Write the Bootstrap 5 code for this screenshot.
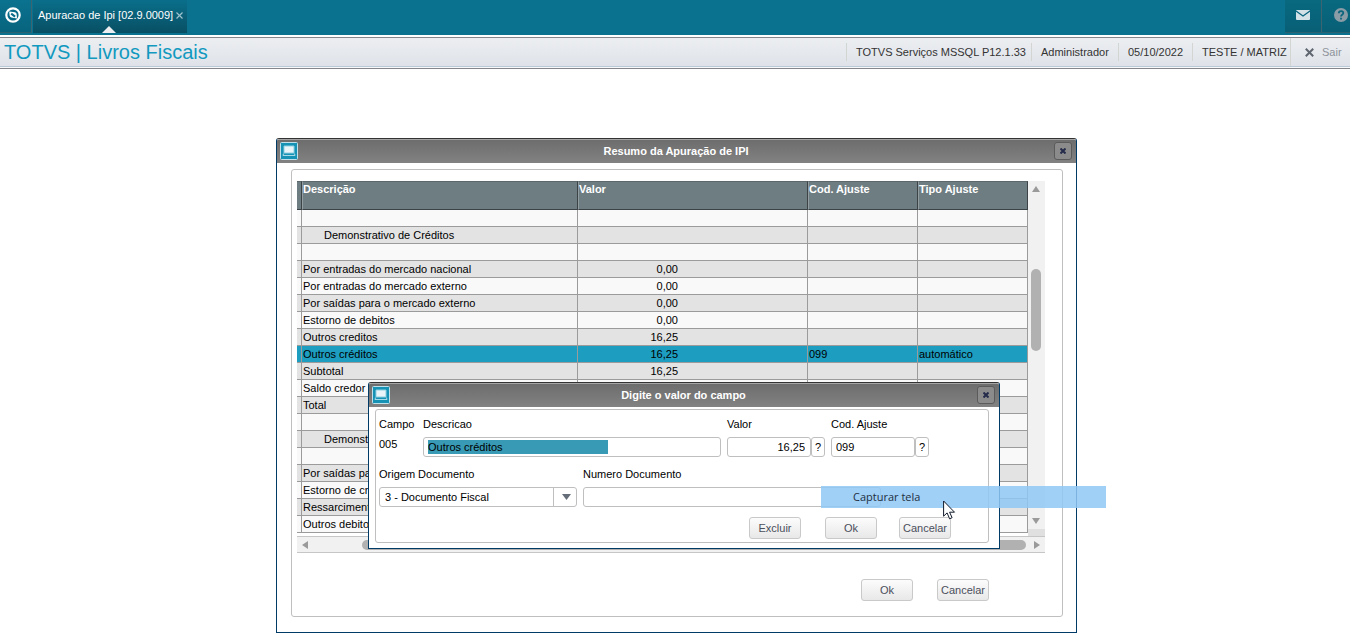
<!DOCTYPE html>
<html lang="pt-BR">
<head>
<meta charset="utf-8">
<meta name="viewport" content="width=device-width, initial-scale=1">
<title>TOTVS | Livros Fiscais</title>
<link href="https://cdn.jsdelivr.net/npm/bootstrap@5.3.0/dist/css/bootstrap.min.css" rel="stylesheet">
<style>
  body { font-family: "Liberation Sans", Arial, sans-serif; font-size: 11px; line-height: 14px; color: #000; background: #fff; overflow-x: hidden; }
  svg { display: block; }
  a { color: inherit; text-decoration: none; }

  .topbar { height: 35px; background: #0a728f; }
  .topbar-btn { height: 33px; border: 0; border-right: 1px solid #3c6470; border-bottom: 1px solid #2b6271; background: linear-gradient(#0a728f, #08647e); padding: 0; }
  .logo-btn { width: 32px; }
  .mail-btn { width: 37px; background: linear-gradient(#08697f, #085f76); }
  .help-btn { width: 28px; background: linear-gradient(#08697f, #085f76); border-right: 0; }
  .app-tab { height: 33px; width: 154px; margin-left: 1px; padding: 0 0 3px 5px; gap: 3px; background: linear-gradient(#0a6f8b, #084f63); color: #fff; }
  .tab-close { border: 0; background: none; padding: 0; }
  .tab-pointer { left: 69px; bottom: 0; }

  .headbar { height: 32px; margin-top: 2px; border-top: 1px solid #85868c; border-bottom: 1px solid #85868c; background: linear-gradient(#eceef1, #dfe3e9 28px, #b9c9d6 28px, #b9c9d6 29px, #f6f8fa 29px); }
  .headbar h1 { font-size: 20px; line-height: 28px; color: #1199bf; }
  .info-item { height: 18px; border-left: 1px solid #d3d5d2; padding-left: 9px; color: #333; }
  .w-server { width: 185px; } .w-user { width: 87px; } .w-date { width: 74px; } .w-branch { width: 98px; }
  .exit-link { width: 60px; height: 28px; padding-left: 14px; gap: 8px; color: #8d929b; }

  .desktop { padding: 69px 0 8px 3px; }
  .win { background: #fff; border: 1px solid #003a66; border-top-color: #333; border-radius: 3px 3px 0 0; }
  .win-main { width: 801px; }
  .win-title { height: 24px; padding: 0 4px 0 3px; background: linear-gradient(#a5a5a5 1px, #6d6d6d 1px, #828282); color: #fff; font-weight: bold; border-radius: 2px 2px 0 0; }
  .win-title h2 { font-size: 11px; line-height: 14px; font-weight: bold; }
  .win-x { width: 18px; height: 18px; padding: 0; border: 1px solid #5b5b5b; border-radius: 3px; background: #8b8b8b; }
  .frame { border: 1px solid #bfbfbf; border-radius: 3px; }
  .frame-main { margin: 6px 13px 15px 14px; padding: 11px 17px 15px 5px; }

  .grid-pane { padding-bottom: 3px; }
  .grid-table { table-layout: fixed; width: 731px; border-collapse: separate; border-spacing: 0; }
  .grid-table th { height: 29px; padding: 0; background: #6e7d82; color: #fff; vertical-align: top; border-top: 1px solid #5b676b; border-right: 1px solid #3c4347; border-bottom: 1px solid #3c4347; border-left: 1px solid #929da1; }
  .grid-table td { height: 17px; padding: 1px 1px 0; line-height: 15px; border-right: 1px solid #9b9b9b; border-bottom: 1px solid #9b9b9b; white-space: nowrap; overflow: hidden; background: #f9f9f9; }
  .grid-table th:first-child, .grid-table td:first-child { padding: 0; border-left: 0; }
  .grid-table tr:nth-child(even) td { background: #e3e3e3; }
  .grid-table tbody tr.picked td { background: #1d9dbf; }
  .grid-table td.amount { text-align: right; padding-right: 129px; }
  .grid-table td.section { padding-left: 22px; }

  .vscroll { width: 17px; background: #f1f1f1; border-bottom: 7px solid #e0e0e0; padding: 5px 3px 5px; }
  .vthumb { width: 10px; height: 82px; margin-top: 77px; border-radius: 5px; background: #b1b1b1; }
  .hscroll { height: 17px; border-top: 1px solid #c6c6c6; border-bottom: 1px solid #c6c6c6; background: #f1f1f1; padding: 0 5px; }
  .hthumb { height: 10px; margin: 0 8px 0 54px; border-radius: 5px; background: #b1b1b1; }

  .btn-flat { width: 52px; height: 22px; padding: 0; border: 1px solid #c9c9c9; border-radius: 3px; background: linear-gradient(#fcfcfc, #e8e8e8); color: #4b4f5c; font-size: 11px; line-height: 18px; }
  .main-actions { margin-top: 26px; padding-right: 56px; gap: 24px; }

  .win-edit { width: 632px; left: 91px; top: 243px; }
  .frame-edit { margin: 2px 10px 5px 6px; padding: 7px 3px 3px; }
  .edit-row { margin-bottom: 10px; gap: 6px; }
  .edit-row label, .cap { display: block; margin-bottom: 6px; line-height: 14px; }
  .w-field { width: 38px; } .w-amount { width: 84px; } .w-long { width: 298px; }
  .box { height: 20px; border: 1px solid #bfbfbf; border-radius: 3px; background: #fff; padding: 0 5px 0 4px; font-size: 11px; line-height: 16px; color: #000; }
  .box-marked { background: linear-gradient(#389ab4, #389ab4) 4px 2px / 180px 14px no-repeat #fff; }
  .btn-q { width: 14px; height: 20px; border: 1px solid #bfbfbf; border-radius: 3px; background: #fff; padding: 0; font-size: 11px; line-height: 16px; color: #000; }
  .combo { width: 198px; padding: 0 24px 0 5px; appearance: none; background: url("data:image/svg+xml,%3Csvg xmlns='http://www.w3.org/2000/svg' width='24' height='18'%3E%3Cpath d='M1.500 0v18' stroke='%23bfbfbf'/%3E%3Cpath d='M10 6h9l-4.500 6z' fill='%23656d78'/%3E%3C/svg%3E") right center no-repeat #fff; }
  .edit-actions { padding-right: 34px; gap: 24px; }
  .edit-actions .btn-flat:last-child { margin-left: -2px; }

  .capture { left: 544px; top: 347px; width: 285px; height: 22px; border: 0; padding: 0 0 0 32px; background: rgba(145, 200, 246, .85); color: #1d2f3e; font: 11px/22px "Open Sans", "Noto Sans", sans-serif; text-align: left; }
  .pointer { left: 666px; top: 361px; }
</style>
</head>
<body>

<header>
  <nav class="topbar d-flex align-items-start" aria-label="Programas">
    <button class="topbar-btn logo-btn d-flex align-items-center" type="button" aria-label="Menu">
      <svg class="ms-1" width="18" height="18" viewBox="0 0 18 18"><circle cx="9" cy="8" r="6.700" fill="none" stroke="#fff" stroke-width="2.200"/><path d="M5.200 4.500 11 5.300q1.600.5 1.700 2.200l.3 4-5.600-.9Q5.800 10 5.600 8.400z" fill="#fff"/><path d="m7.200 6.600 3.900 3" stroke="#0a6c88" stroke-width="2"/></svg>
    </button>
    <div class="app-tab position-relative d-flex align-items-center">
      <a href="#" class="text-nowrap">Apuracao de Ipi [02.9.0009]</a>
      <button class="tab-close" type="button" aria-label="Fechar aba"><svg width="7" height="7" viewBox="0 0 7 7"><path d="m.5.500 6 6m0-6-6 6" stroke="#9fc3ce" stroke-width="1.200"/></svg></button>
      <svg class="tab-pointer position-absolute" width="14" height="7" viewBox="0 0 14 7"><path d="M0 7 7 0l7 7z" fill="#eceef1"/></svg>
    </div>
    <button class="topbar-btn mail-btn ms-auto d-flex align-items-center justify-content-center pb-0" type="button" aria-label="Mensagens">
      <svg width="14" height="12" viewBox="0 0 14 12"><rect width="14" height="10" rx="1" fill="#d3e0e6"/><path d="m0 1 7 5 7-5" fill="none" stroke="#08647e" stroke-width="1.300"/></svg>
    </button>
    <button class="topbar-btn help-btn d-flex align-items-center ps-2" type="button" aria-label="Ajuda">
      <svg class="ms-1" width="14" height="16" viewBox="0 0 14 16"><circle cx="7" cy="7" r="7" fill="#8a9ca6"/><path d="M4.800 5.300c0-3 4.500-2.800 4.500-.2C9.300 6.700 7 6.700 7 8.400M7 9.700v1.800" fill="none" stroke="#0a657d" stroke-width="1.800"/></svg>
    </button>
  </nav>
  <div class="headbar d-flex align-items-start">
    <h1 class="fw-normal mb-0 ms-1">TOTVS | Livros Fiscais</h1>
    <div class="d-flex align-items-center ms-auto text-nowrap">
      <span class="info-item w-server d-flex align-items-center">TOTVS Serviços MSSQL P12.1.33</span>
      <span class="info-item w-user d-flex align-items-center">Administrador</span>
      <span class="info-item w-date d-flex align-items-center">05/10/2022</span>
      <span class="info-item w-branch d-flex align-items-center">TESTE / MATRIZ</span>
      <a href="#" class="info-item exit-link d-flex align-items-center"><svg width="9" height="9" viewBox="0 0 9 9"><path d="m.8.800 7.400 7.400m0-7.400L.8 8.200" stroke="#5f6670" stroke-width="2"/></svg>Sair</a>
    </div>
  </div>
</header>

<main class="desktop">
  <section class="win win-main position-relative mx-auto">
    <div class="win-title d-flex align-items-center">
      <svg width="18" height="18" viewBox="0 0 18 18"><rect x=".5" y=".5" width="17" height="17" rx="1" fill="#1592b4" stroke="#bfe0ea"/><path d="M4 4h10v7H4z" fill="#e8f4f8" stroke="#8fd0e2"/><path d="M3.500 11.500 3 13.500h12l-.5-2" fill="none" stroke="#a8d9e7"/></svg>
      <h2 class="flex-grow-1 text-center mb-0">Resumo da Apuração de IPI</h2>
      <button class="win-x d-flex align-items-center justify-content-center" type="button" aria-label="Fechar"><svg width="6" height="6" viewBox="0 0 6 6"><path d="m.5.500 5 5m0-5-5 5" stroke="#252b4a" stroke-width="2"/></svg></button>
    </div>
    <div class="frame frame-main">
      <div class="d-flex">
        <div class="grid-pane">
          <table class="grid-table">
            <colgroup><col style="width:5px"><col style="width:276px"><col style="width:230px"><col style="width:110px"><col style="width:110px"></colgroup>
            <thead><tr><th></th><th>Descrição</th><th>Valor</th><th>Cod. Ajuste</th><th>Tipo Ajuste</th></tr></thead>
            <tbody>
              <tr><td></td><td></td><td></td><td></td><td></td></tr>
              <tr><td></td><td class="section">Demonstrativo de Créditos</td><td></td><td></td><td></td></tr>
              <tr><td></td><td></td><td></td><td></td><td></td></tr>
              <tr><td></td><td>Por entradas do mercado nacional</td><td class="amount">0,00</td><td></td><td></td></tr>
              <tr><td></td><td>Por entradas do mercado externo</td><td class="amount">0,00</td><td></td><td></td></tr>
              <tr><td></td><td>Por saídas para o mercado externo</td><td class="amount">0,00</td><td></td><td></td></tr>
              <tr><td></td><td>Estorno de debitos</td><td class="amount">0,00</td><td></td><td></td></tr>
              <tr><td></td><td>Outros creditos</td><td class="amount">16,25</td><td></td><td></td></tr>
              <tr class="picked"><td></td><td>Outros créditos</td><td class="amount">16,25</td><td>099</td><td>automático</td></tr>
              <tr><td></td><td>Subtotal</td><td class="amount">16,25</td><td></td><td></td></tr>
              <tr><td></td><td>Saldo credor</td><td></td><td></td><td></td></tr>
              <tr><td></td><td>Total</td><td></td><td></td><td></td></tr>
              <tr><td></td><td></td><td></td><td></td><td></td></tr>
              <tr><td></td><td class="section">Demonstr</td><td></td><td></td><td></td></tr>
              <tr><td></td><td></td><td></td><td></td><td></td></tr>
              <tr><td></td><td>Por saídas pa</td><td></td><td></td><td></td></tr>
              <tr><td></td><td>Estorno de cr</td><td></td><td></td><td></td></tr>
              <tr><td></td><td>Ressarciment</td><td></td><td></td><td></td></tr>
              <tr><td></td><td>Outros debito</td><td></td><td></td><td></td></tr>
            </tbody>
          </table>
        </div>
        <div class="vscroll d-flex flex-column">
          <svg width="10" height="6" viewBox="0 0 10 6"><path d="M1 6 5 0l4 6z" fill="#9a9a9a"/></svg>
          <div class="vthumb"></div>
          <svg class="mt-auto" width="10" height="6" viewBox="0 0 10 6"><path d="M1 0h8L5 6z" fill="#9a9a9a"/></svg>
        </div>
      </div>
      <div class="hscroll d-flex align-items-center">
        <svg width="6" height="8" viewBox="0 0 6 8"><path d="M6 0v8L0 4z" fill="#9a9a9a"/></svg>
        <div class="hthumb flex-grow-1"></div>
        <svg width="6" height="8" viewBox="0 0 6 8"><path d="M0 0v8l6-4z" fill="#9a9a9a"/></svg>
      </div>
      <div class="main-actions d-flex justify-content-end">
        <button class="btn-flat" type="button">Ok</button>
        <button class="btn-flat" type="button">Cancelar</button>
      </div>
    </div>

    <form class="win win-edit position-absolute">
      <div class="win-title d-flex align-items-center">
        <svg width="18" height="18" viewBox="0 0 18 18"><rect x=".5" y=".5" width="17" height="17" rx="1" fill="#1592b4" stroke="#bfe0ea"/><path d="M4 4h10v7H4z" fill="#e8f4f8" stroke="#8fd0e2"/><path d="M3.500 11.500 3 13.500h12l-.5-2" fill="none" stroke="#a8d9e7"/></svg>
        <h2 class="flex-grow-1 text-center mb-0">Digite o valor do campo</h2>
        <button class="win-x d-flex align-items-center justify-content-center" type="button" aria-label="Fechar"><svg width="6" height="6" viewBox="0 0 6 6"><path d="m.5.500 5 5m0-5-5 5" stroke="#252b4a" stroke-width="2"/></svg></button>
      </div>
      <div class="frame frame-edit">
        <div class="edit-row d-flex">
          <div class="w-field"><span class="cap">Campo</span><span>005</span></div>
          <div><label for="descricao">Descricao</label><input id="descricao" class="box box-marked w-long d-block" type="text" value="Outros créditos"></div>
          <div class="me-0"><label for="valor">Valor</label><div class="d-flex"><input id="valor" class="box w-amount text-end" type="text" value="16,25"><button class="btn-q" type="button" aria-label="Consultar valor">?</button></div></div>
          <div class="ps-0"><label for="ajuste" class="ms-0">Cod. Ajuste</label><div class="d-flex"><input id="ajuste" class="box w-amount" type="text" value="099"><button class="btn-q" type="button" aria-label="Consultar ajuste">?</button></div></div>
        </div>
        <div class="edit-row d-flex">
          <div><label for="origem">Origem Documento</label><select id="origem" class="box combo d-block"><option>3 - Documento Fiscal</option></select></div>
          <div><label for="numero">Numero Documento</label><input id="numero" class="box w-long d-block" type="text"></div>
        </div>
        <div class="edit-actions d-flex justify-content-end">
          <button class="btn-flat" type="button">Excluir</button>
          <button class="btn-flat" type="button">Ok</button>
          <button class="btn-flat" type="button">Cancelar</button>
        </div>
      </div>
    </form>

    <button class="capture position-absolute" type="button">Capturar tela</button>
    <svg class="pointer position-absolute" width="13" height="20" viewBox="0 0 13 20"><path d="M.6 1v15.200l3.500-3.300 2.500 5.900 2.500-1.100-2.500-5.500h4.900z" fill="#fff" stroke="#111a2a"/></svg>
  </section>
</main>

<script src="https://cdn.jsdelivr.net/npm/bootstrap@5.3.0/dist/js/bootstrap.bundle.min.js"></script>
</body>
</html>
